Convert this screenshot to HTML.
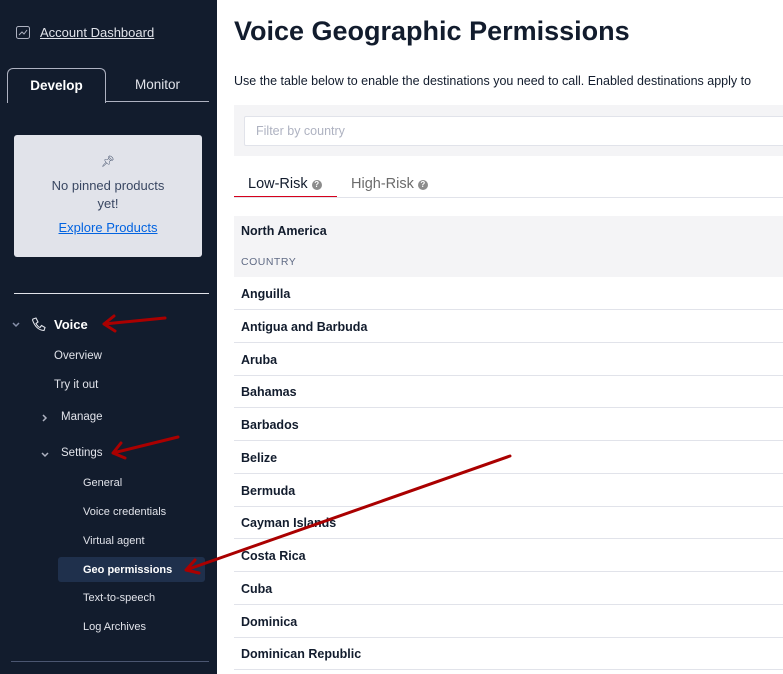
<!DOCTYPE html>
<html><head><meta charset="utf-8"><style>
*{margin:0;padding:0;box-sizing:border-box}
body{width:783px;height:674px;overflow:hidden;font-family:"Liberation Sans",sans-serif;background:#fff;position:relative}
.sb{position:absolute;left:0;top:0;width:217px;height:674px;background:#121c2d;color:#e1e3ea}
.t{position:absolute;white-space:nowrap}
.main{position:absolute;left:217px;top:0;right:0;height:674px}
.row{position:absolute;left:17px;width:600px;height:33px;border-bottom:1px solid #e1e3ea;font-size:12.5px;font-weight:bold;color:#121c2d;padding:10px 0 0 7px}
.q{display:inline-block;width:10px;height:10px;border-radius:50%;background:#8c8c8c;color:#fff;font-size:8px;line-height:10px;text-align:center;font-weight:bold;vertical-align:1px}
</style></head><body>
<div class="sb">
  <svg class="t" style="left:16px;top:26px" width="14" height="13" viewBox="0 0 14 13"><rect x="0.5" y="0.5" width="13" height="12" rx="2" fill="none" stroke="#aeb2c1"/><path d="M3 9 L6 6 L8 8 L11 4" fill="none" stroke="#aeb2c1"/></svg>
  <div class="t" style="left:40px;top:25px;font-size:13px;text-decoration:underline;color:#e1e3ea">Account Dashboard</div>
  <div class="t" style="left:7px;top:68px;width:99px;height:35px;border:1px solid #aeb2c1;border-bottom:none;border-radius:6px 6px 0 0;font-weight:bold;font-size:13.5px;text-align:center;padding-top:9px;color:#fff">Develop</div>
  <div class="t" style="left:106px;top:101px;width:103px;border-top:1px solid #aeb2c1"></div>
  <div class="t" style="left:106px;top:77px;width:103px;text-align:center;font-size:13.5px;color:#e1e3ea">Monitor</div>
  <div class="t" style="left:14px;top:135px;width:188px;height:122px;background:#e1e3ea;border-radius:3px;color:#394762;text-align:center;font-size:13px;line-height:18px;padding-top:18px">
    <div style="font-size:11px">📌︎</div>
    <div style="margin-top:6px">No pinned products<br>yet!</div>
    <div style="margin-top:6px;color:#0263e0;text-decoration:underline">Explore Products</div>
  </div>
  <div class="t" style="left:14px;top:293px;width:195px;border-top:1px solid #e1e3ea"></div>
  <svg class="t" style="left:12px;top:322px" width="8" height="6" viewBox="0 0 8 6"><path d="M1 1 L4 4 L7 1" fill="none" stroke="#8891aa" stroke-width="1.5"/></svg>
  <svg class="t" style="left:31px;top:317px" width="15" height="15" viewBox="0 0 15 15"><path d="M2 2 L5 1 L7 5 L5 6.5 Q7 10 9 10.5 L10.5 8.5 L14 10.5 L13 13.5 Q5 13 1.5 3 Z" fill="none" stroke="#e1e3ea" stroke-width="1.1"/></svg>
  <div class="t" style="left:54px;top:317px;font-size:13px;font-weight:bold;color:#fff">Voice</div>
  <div class="t" style="left:54px;top:350px;font-size:11.5px">Overview</div>
  <div class="t" style="left:54px;top:379px;font-size:11.5px">Try it out</div>
  <svg class="t" style="left:42px;top:414px" width="6" height="8" viewBox="0 0 6 8"><path d="M1 1 L4 4 L1 7" fill="none" stroke="#aeb2c1" stroke-width="1.5"/></svg>
  <div class="t" style="left:61px;top:411px;font-size:11.5px">Manage</div>
  <svg class="t" style="left:41px;top:452px" width="8" height="6" viewBox="0 0 8 6"><path d="M1 1 L4 4 L7 1" fill="none" stroke="#aeb2c1" stroke-width="1.5"/></svg>
  <div class="t" style="left:61px;top:447px;font-size:11.5px">Settings</div>
  <div class="t" style="left:83px;top:477px;font-size:11px">General</div>
  <div class="t" style="left:83px;top:506px;font-size:11px">Voice credentials</div>
  <div class="t" style="left:83px;top:535px;font-size:11px">Virtual agent</div>
  <div class="t" style="left:58px;top:557px;width:147px;height:25px;background:#1f304c;border-radius:3px"></div>
  <div class="t" style="left:83px;top:564px;font-size:11px;font-weight:bold;color:#fff">Geo permissions</div>
  <div class="t" style="left:83px;top:592px;font-size:11px">Text-to-speech</div>
  <div class="t" style="left:83px;top:621px;font-size:11px">Log Archives</div>
  <div class="t" style="left:11px;top:661px;width:198px;border-top:1px solid #4b5671"></div>
</div>
<div class="main">
  <div class="t" style="left:17px;top:16px;font-size:27px;font-weight:bold;color:#121c2d">Voice Geographic Permissions</div>
  <div class="t" style="left:17px;top:74px;font-size:12.5px;color:#121c2d">Use the table below to enable the destinations you need to call. Enabled destinations apply to</div>
  <div class="t" style="left:17px;top:105px;width:600px;height:51px;background:#f4f4f6"></div>
  <div class="t" style="left:27px;top:116px;width:600px;height:30px;background:#fff;border:1px solid #e1e3ea;border-radius:2px;font-size:12.5px;color:#aeb2c1;padding:7px 11px">Filter by country</div>
  <div class="t" style="left:17px;top:197px;width:600px;border-top:1px solid #e1e3ea"></div>
  <div class="t" style="left:17px;top:196px;width:103px;border-top:1px solid #d6001c"></div>
  <div class="t" style="left:31px;top:176px;font-size:14.5px;color:#121c2d">Low-Risk <span class="q">?</span></div>
  <div class="t" style="left:134px;top:176px;font-size:14.5px;color:#6b6b6b">High-Risk <span class="q">?</span></div>
  <div class="t" style="left:17px;top:216px;width:600px;height:61px;background:#f4f4f6"></div>
  <div class="t" style="left:24px;top:224px;font-size:12.5px;font-weight:bold;color:#121c2d">North America</div>
  <div class="t" style="left:24px;top:256px;font-size:10.5px;color:#606b85;letter-spacing:.5px">COUNTRY</div>
  <div class="row" style="top:277px">Anguilla</div>
  <div class="row" style="top:310px">Antigua and Barbuda</div>
  <div class="row" style="top:343px">Aruba</div>
  <div class="row" style="top:375px">Bahamas</div>
  <div class="row" style="top:408px">Barbados</div>
  <div class="row" style="top:441px">Belize</div>
  <div class="row" style="top:474px">Bermuda</div>
  <div class="row" style="top:506px">Cayman Islands</div>
  <div class="row" style="top:539px">Costa Rica</div>
  <div class="row" style="top:572px">Cuba</div>
  <div class="row" style="top:605px">Dominica</div>
  <div class="row" style="top:637px">Dominican Republic</div>
</div>
<svg class="t" style="left:0;top:0" width="783" height="674" viewBox="0 0 783 674">
 <g stroke="#a00" stroke-width="3" fill="none" stroke-linecap="round" stroke-linejoin="round">
  <path d="M165 318 L104 324 M114 316 L104 324 L115 331"/>
  <path d="M178 437 L113 453 M121 443 L113 453 L125 458"/>
  <path d="M510 456 L186 570 M195 560 L186 570 L199 573"/>
 </g>
</svg>
</body></html>
